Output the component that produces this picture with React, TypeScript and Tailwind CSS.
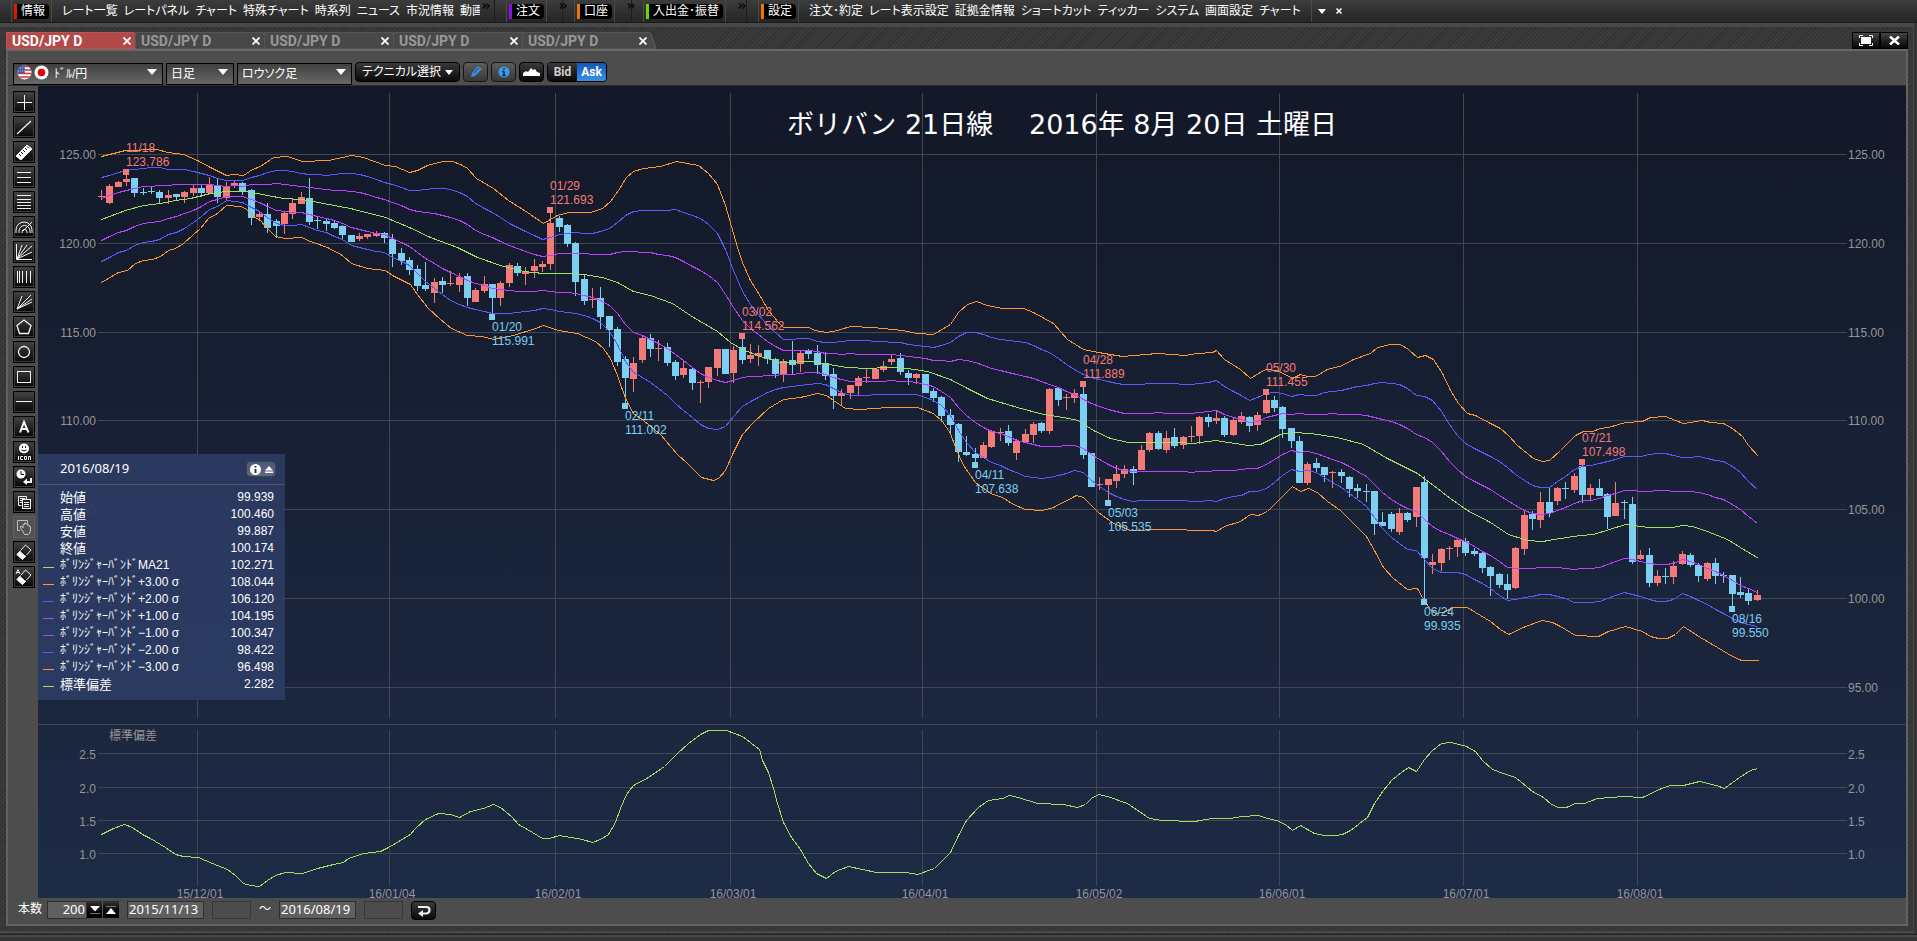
import type { ReactNode } from 'react';

const menuGroups = [
  {
    label: '情報',
    bar: 'bg-[#e01800]',
    width: 'w-[495px]',
    items: ['レート一覧', 'レートパネル', 'チャート', '特殊チャート', '時系列', 'ニュース', '市況情報', '動画'],
  },
  { label: '注文', bar: 'bg-[#8a10e8]', width: 'w-[68px]', items: [] },
  { label: '口座', bar: 'bg-[#f07800]', width: 'w-[69px]', items: [] },
  { label: '入出金･振替', bar: 'bg-[#6ad800]', width: 'w-[115px]', items: [] },
];

const settingItems = ['注文･約定', 'レート表示設定', '証拠金情報', 'ショートカット', 'ティッカー', 'システム', '画面設定', 'チャート'];

const readings = [
  { name: '始値', value: '99.939' },
  { name: '高値', value: '100.460' },
  { name: '安値', value: '99.887' },
  { name: '終値', value: '100.174' },
  { name: 'ﾎﾞﾘﾝｼﾞｬｰﾊﾞﾝﾄﾞMA21', value: '102.271', mark: 'bg-[#a0e060]' },
  { name: 'ﾎﾞﾘﾝｼﾞｬｰﾊﾞﾝﾄﾞ+3.00 σ', value: '108.044', mark: 'bg-[#ff9632]' },
  { name: 'ﾎﾞﾘﾝｼﾞｬｰﾊﾞﾝﾄﾞ+2.00 σ', value: '106.120', mark: 'bg-[#5a5aff]' },
  { name: 'ﾎﾞﾘﾝｼﾞｬｰﾊﾞﾝﾄﾞ+1.00 σ', value: '104.195', mark: 'bg-[#c040ff]' },
  { name: 'ﾎﾞﾘﾝｼﾞｬｰﾊﾞﾝﾄﾞ−1.00 σ', value: '100.347', mark: 'bg-[#c040ff]' },
  { name: 'ﾎﾞﾘﾝｼﾞｬｰﾊﾞﾝﾄﾞ−2.00 σ', value: '98.422', mark: 'bg-[#5a5aff]' },
  { name: 'ﾎﾞﾘﾝｼﾞｬｰﾊﾞﾝﾄﾞ−3.00 σ', value: '96.498', mark: 'bg-[#ff9632]' },
  { name: '標準偏差', value: '2.282', mark: 'bg-[#a0e060]' },
];

// One candle per business day: direction (u/d), high, body top, body bottom, low
const candles = `u190,196,197,200 u184,186,203,204 u181,182,187,187 u175,179,182,186 d178,178,193,197
d188,192,193,195 d186,191,192,194 d190,192,198,203 u190,195,198,204 d194,194,197,200
u191,192,197,203 u184,188,193,196 d185,188,193,197 u177,184,193,193 d179,186,197,203
u182,187,198,200 u181,183,185,188 d182,183,191,195 d189,190,218,225 u211,214,217,221
d203,214,228,233 d219,221,226,238 u212,213,224,234 u199,203,214,219 u192,197,204,204
d178,198,222,225 d216,220,221,229 d219,221,224,231 d221,223,228,229 d225,226,235,239
d235,235,242,242 u233,236,239,241 u234,234,237,239 u231,233,236,237 d232,233,238,243
d234,239,254,267 d248,253,261,265 d257,260,270,275 d265,269,286,291 d262,285,289,291
u278,282,293,303 d277,281,285,293 u271,283,284,286 u273,277,285,292 d273,276,298,306
u288,290,302,302 u276,284,291,293 d284,284,298,316 u281,283,298,306 u263,265,283,287
d263,266,273,276 u267,271,274,285 u259,266,271,278 u261,264,267,272 u213,223,264,270
d216,218,227,232 d224,225,244,247 d242,243,282,296 d275,279,301,305 u288,299,300,308
d287,298,317,329 d316,316,330,347 d327,329,362,366 d356,359,378,403 u357,363,379,392
u336,338,360,363 d334,338,349,357 u340,348,349,361 d343,347,363,366 d360,362,376,380
u361,368,375,378 d367,369,383,390 u380,382,383,403 u367,367,382,388 u349,349,368,376
d349,349,374,374 u346,350,373,383 d339,347,360,364 u344,355,359,363 u345,353,356,366
d350,350,359,364 d358,359,374,378 u359,361,374,382 d341,360,365,374 u351,353,364,372
d349,350,354,359 d345,353,365,374 d352,363,376,380 d368,374,396,409 u389,393,396,406
u385,385,393,399 u376,378,386,396 u369,377,378,383 u368,369,379,379 u361,366,370,372
u355,359,362,365 d353,358,372,375 d370,373,378,385 u373,374,378,384 d374,374,393,393
d388,391,398,402 d396,397,416,422 d409,415,425,433 d423,424,452,462 d436,452,455,456
d448,454,458,462 u442,445,458,458 u430,431,447,448 u428,432,433,441 d425,431,443,446
u439,441,453,460 u429,434,442,443 u422,424,435,443 d422,423,431,433 u388,389,431,434
d387,388,400,406 u394,397,398,410 u389,393,398,403 d387,394,455,459 d453,453,487,487
u477,484,485,490 u479,479,485,500 u465,474,481,488 u465,469,474,478 d466,469,473,485
u445,450,470,470 u432,433,450,452 d431,433,449,450 u431,438,450,453 d428,437,446,448
u436,437,445,449 u426,436,437,442 u416,417,436,444 d414,417,422,427 u411,418,421,424
d416,418,435,437 u418,420,435,436 u412,416,422,424 d416,417,426,432 u412,415,425,431
u395,400,413,414 d396,400,408,412 d406,407,429,438 d428,428,441,448 d436,441,483,483
u462,464,483,485 d458,463,468,473 d467,467,475,482 u471,472,473,488 d469,472,476,483
d476,477,489,497 d484,488,491,498 d484,491,492,502 d491,491,524,535 d512,522,526,526
d512,514,529,532 u508,513,532,535 d512,513,520,522 u487,487,517,527 d476,482,558,599
u554,562,565,574 u548,549,563,571 u546,548,549,560 u539,540,547,557 d538,541,553,556
d548,551,554,556 d552,553,568,573 d566,567,576,596 d573,574,585,588 d574,584,590,599
u547,548,588,589 u510,515,549,555 d511,514,519,530 u492,502,520,528 d487,502,513,517
u487,488,501,505 d482,488,489,499 u473,476,490,493 d465,466,495,503 u484,488,495,500
d479,488,496,496 d493,494,517,529 u482,503,516,516 d500,502,503,519 d497,504,562,564
u550,555,559,560 d548,555,583,587 u570,576,583,586 d568,576,577,584 u561,566,577,584
u551,554,564,565 d553,555,565,567 d563,565,576,582 u562,563,579,581 d558,563,576,584
d572,575,576,583 d575,575,594,606 d577,592,595,598 d589,593,601,605 u590,595,600,601`
  .split(/\s+/)
  .map((c) => ({ up: c[0] === 'u', y: c.slice(1).split(',').map(Number) }));

const toPoints = (s: string) => s.trim().split(/\s+/).map((p) => p.split(',').map(Number));

const upper = toPoints(`101,156 113,153 125,150 157,149 167,152 183,154 197,160 210,167 226,175 233,174 243,175 252,169
260,166 273,157 287,156 302,161 328,160 351,155 363,157 385,165 395,166 409,172 417,170 427,165 442,161 452,161 460,164
467,168 476,178 493,188 508,200 527,212 543,223 557,215 568,212 590,212 602,208 610,201 618,190 626,177 633,171 643,168
660,166 676,161 698,165 708,173 717,184 725,205 731,226 737,247 742,262 750,280 760,296 768,310 778,322 783,327 808,327
815,330 826,332 837,330 850,326 872,327 902,330 917,333 933,334 950,324 958,312 967,304 976,301 987,305 1002,308
1023,308 1033,312 1053,323 1067,339 1083,349 1098,352 1122,356 1157,353 1185,355 1197,353 1212,352 1216,350 1224,359
1240,369 1250,378 1265,369 1277,370 1292,378 1300,374 1307,376 1315,376 1327,369 1342,365 1353,359 1370,353 1377,347
1390,344 1400,344 1408,349 1417,357 1425,355 1433,359 1442,373 1450,390 1458,403 1467,413 1475,415 1490,423 1500,428
1508,435 1517,445 1533,458 1542,461 1549,460 1560,450 1575,435 1583,431 1592,431 1600,428 1608,427 1625,422 1642,421
1650,417 1665,416 1675,420 1683,423 1702,420 1710,422 1723,423 1732,428 1742,436 1748,445 1758,456`);

const middle = toPoints(`101,219 125,210 143,205 160,203 175,200 190,198 210,193 225,191 243,191 252,192 267,195 283,198
302,199 323,203 350,208 385,217 409,227 430,237 457,247 477,257 500,265 523,271 543,273 570,273 583,274 602,277 617,282
633,291 650,295 672,303 693,317 717,331 730,342 742,349 760,356 780,362 813,361 828,364 847,367 867,368 887,367 907,368
927,371 950,379 967,388 987,398 1017,407 1043,414 1063,417 1078,420 1093,430 1110,438 1128,442 1180,442 1193,443
1215,440 1248,445 1260,444 1280,434 1292,432 1310,433 1337,437 1363,444 1387,458 1417,473 1433,485 1450,498 1467,510
1490,522 1508,534 1527,540 1542,541 1560,538 1580,535 1593,534 1625,524 1648,527 1672,527 1682,525 1692,526 1707,531
1727,539 1740,547 1758,558`);

const lower = toPoints(`101,282 118,272 127,270 135,263 143,260 152,259 160,256 168,250 175,248 183,243 193,234 200,228
208,218 217,213 226,205 240,206 245,208 253,216 260,220 267,228 275,236 285,238 301,237 310,241 327,247 342,255 351,263
367,268 385,270 392,275 410,284 417,294 427,307 440,319 451,328 467,335 482,336 493,339 513,335 535,328 543,325 558,330
577,333 595,341 603,348 610,358 617,375 625,398 633,413 643,420 660,434 677,454 687,463 701,477 713,480 718,478 725,470
733,452 742,434 752,423 768,408 783,399 800,397 817,393 826,395 833,400 845,408 860,409 887,407 917,407 933,413 942,421
950,433 955,447 963,465 975,482 990,493 1002,497 1013,504 1025,509 1042,510 1053,507 1076,495 1083,497 1098,512
1113,523 1130,530 1160,529 1212,530 1216,531 1224,526 1240,521 1250,514 1258,515 1267,511 1275,503 1292,486 1300,491
1308,488 1317,492 1327,501 1340,510 1350,520 1366,536 1375,552 1383,567 1393,578 1407,589 1417,588 1422,597 1430,609
1435,613 1443,612 1453,607 1467,607 1475,612 1490,621 1500,629 1508,634 1525,626 1542,620 1552,622 1560,626 1575,635
1598,636 1608,631 1625,626 1642,631 1650,636 1658,638 1667,638 1675,634 1683,626 1700,637 1717,647 1732,656 1741,660
1758,660`);

const deviation = `101,834 113,828 124,824 132,827 142,834 150,838 165,847 175,854 183,856 198,857 212,863 227,869 235,875
243,883 250,885 259,886 267,880 275,875 285,872 302,873 317,868 333,864 343,862 348,858 363,853 380,851 388,847 410,834
415,828 425,819 438,813 450,814 459,817 470,811 483,808 493,804 500,807 511,816 518,824 527,829 542,838 549,838 559,835
570,837 582,839 592,842 600,839 608,834 615,822 620,808 626,794 633,785 648,777 664,766 676,754 688,743 700,734 708,730
726,730 742,736 759,749 762,760 768,772 773,788 777,803 783,822 791,837 800,849 808,863 816,873 826,878 835,871 848,866
862,869 876,872 906,872 917,874 934,868 950,852 958,835 966,820 978,807 988,800 1002,798 1009,795 1018,797 1037,803
1063,804 1077,807 1085,804 1092,797 1099,794 1110,797 1127,803 1149,818 1162,820 1194,821 1212,818 1230,818 1241,816
1258,815 1267,818 1276,820 1285,824 1292,830 1300,825 1314,833 1324,835 1335,835 1342,834 1350,830 1367,817 1374,803
1383,790 1392,779 1401,772 1408,767 1416,771 1424,759 1432,750 1441,743 1451,742 1466,746 1475,751 1482,760 1492,769
1503,773 1515,777 1532,791 1543,797 1551,804 1558,807 1566,807 1575,803 1584,803 1597,798 1623,796 1642,797 1661,788
1670,785 1683,785 1699,781 1716,785 1724,788 1739,777 1750,770 1757,768`;

const months = [
  [197, '15/12/01'],
  [389, '16/01/04'],
  [555, '16/02/01'],
  [730, '16/03/01'],
  [922, '16/04/01'],
  [1096, '16/05/02'],
  [1279, '16/06/01'],
  [1463, '16/07/01'],
  [1637, '16/08/01'],
] as const;

const priceTicks = [
  [154, '125.00'],
  [243, '120.00'],
  [332, '115.00'],
  [420, '110.00'],
  [509, '105.00'],
  [598, '100.00'],
  [687, '95.00'],
] as const;

const deviationTicks = [
  [753, '2.5'],
  [787, '2.0'],
  [820, '1.5'],
  [853, '1.0'],
] as const;

const pivots = [
  { day: 3, y: 169, high: true, date: '11/18', price: '123.786' },
  { day: 47, y: 314, high: false, date: '01/20', price: '115.991' },
  { day: 54, y: 207, high: true, date: '01/29', price: '121.693' },
  { day: 63, y: 403, high: false, date: '02/11', price: '111.002' },
  { day: 77, y: 333, high: true, date: '03/02', price: '114.562' },
  { day: 105, y: 462, high: false, date: '04/11', price: '107.638' },
  { day: 118, y: 381, high: true, date: '04/28', price: '111.889' },
  { day: 121, y: 500, high: false, date: '05/03', price: '105.535' },
  { day: 140, y: 389, high: true, date: '05/30', price: '111.455' },
  { day: 159, y: 599, high: false, date: '06/24', price: '99.935' },
  { day: 178, y: 459, high: true, date: '07/21', price: '107.498' },
  { day: 196, y: 606, high: false, date: '08/16', price: '99.550' },
];

const dayX = (i: number) => Math.round(101 + i * 8.32);

function valueAt(points: number[][], x: number) {
  const next = points.findIndex((p) => p[0] >= x);
  if (next === 0) return points[0][1];
  if (next < 0) return points[points.length - 1][1];
  const [x0, y0] = points[next - 1];
  const [x1, y1] = points[next];
  return y0 + ((y1 - y0) * (x - x0)) / (x1 - x0);
}

// Inner bands sit at thirds between the average and the outer band
function band(outer: number[][], sigma: number) {
  return candles
    .map((_, i) => {
      const x = dayX(i);
      const mid = valueAt(middle, x);
      return `${x},${Math.round(mid + ((valueAt(outer, x) - mid) * sigma) / 3)}`;
    })
    .join(' ');
}

const join = (points: number[][]) => points.map((p) => p.join(',')).join(' ');

function Chart() {
  return (
    <svg viewBox="38 86 1868 812" className="block w-full h-auto overflow-visible" role="img" aria-label="USD/JPY">
      <defs>
        <linearGradient id="night" x1="0" y1="0" x2="0" y2="1">
          <stop offset="0" stopColor="#121827" />
          <stop offset="1" stopColor="#1e2b46" />
        </linearGradient>
      </defs>
      <rect x="38" y="86" width="1868" height="812" fill="url(#night)" />

      <g fill="#424650" shapeRendering="crispEdges">
        {months.map(([x]) => (
          <g key={x}>
            <rect x={x} y="93" width="1" height="625" />
            <rect x={x} y="730" width="1" height="156" />
          </g>
        ))}
        {[...priceTicks, ...deviationTicks].map(([y]) => (
          <rect key={y} x="98" y={y} width="1749" height="1" />
        ))}
        <rect x="38" y="724" width="1868" height="1" />
      </g>

      <g className="text-[12px] font-['Liberation_Sans',sans-serif]" fill="#959595">
        {priceTicks.map(([y, label]) => (
          <g key={y}>
            <text x="96" y={y + 5} textAnchor="end">{label}</text>
            <text x="1848" y={y + 5}>{label}</text>
          </g>
        ))}
        {deviationTicks.map(([y, label]) => (
          <g key={y}>
            <text x="96" y={y + 6} textAnchor="end">{label}</text>
            <text x="1848" y={y + 6}>{label}</text>
          </g>
        ))}
        {months.map(([x, label]) => (
          <text key={x} x={x + 3} y="898" textAnchor="middle">{label}</text>
        ))}
        <text x="109" y="740" className="font-['Noto_Sans_CJK_JP',sans-serif]">標準偏差</text>
      </g>

      <g shapeRendering="crispEdges">
        {candles.map(({ up, y: [high, top, bottom, low] }, i) => (
          <g key={i} fill={up ? '#f47a78' : '#7ccff0'}>
            <rect x={dayX(i)} y={high} width="1" height={low - high} />
            <rect x={dayX(i) - 3} y={top} width="7" height={bottom - top} />
          </g>
        ))}
      </g>

      <g fill="none" strokeWidth="1" shapeRendering="crispEdges" transform="translate(0.5 0.5)">
        <polyline points={join(upper)} stroke="#ff9632" />
        <polyline points={band(upper, 2)} stroke="#5a5aff" />
        <polyline points={band(upper, 1)} stroke="#c040ff" />
        <polyline points={join(middle)} stroke="#a0e060" />
        <polyline points={band(lower, 1)} stroke="#c040ff" />
        <polyline points={band(lower, 2)} stroke="#5a5aff" />
        <polyline points={join(lower)} stroke="#ff9632" />
        <polyline points={deviation} stroke="#a0e060" />
      </g>

      <g className="text-[12px] font-['Liberation_Sans',sans-serif]">
        {pivots.map((p) => (
          <g key={p.date} fill={p.high ? '#f47a78' : '#7ccff0'}>
            <rect x={dayX(p.day) - 3} y={p.y} width="6" height="6" />
            <text x={dayX(p.day)} y={p.high ? p.y - 17 : p.y + 17}>{p.date}</text>
            <text x={dayX(p.day)} y={p.high ? p.y - 3 : p.y + 31}>{p.price}</text>
          </g>
        ))}
      </g>

      <g fill="#fff" className="text-[27px] font-['DejaVu_Sans','Noto_Sans_CJK_JP',sans-serif]">
        <text x="787" y="134">ボリバン 21日線</text>
        <text x="1029" y="134">2016年 8月 20日 土曜日</text>
      </g>
    </svg>
  );
}

const eraser = (
  <>
    <path d="M4 13.500L12.500 4L18 9L9.500 18.500Z" />
    <path d="M4 13.500L7 10.500L12.500 15.500L9.500 18.500Z" fill="#fff" />
    <path d="M7 8.500L14 15" stroke="#111" />
  </>
);

const tools: { name: string; icon: ReactNode; disabled?: boolean }[] = [
  { name: '十字線', icon: <path d="M4 11.500H19M11.500 4V19" /> },
  { name: '直線', icon: <path d="M4 18L18 5" strokeWidth="1.300" /> },
  {
    name: '定規',
    icon: (
      <>
        <path d="M3 15 L14 4 L19 8 L8 19 Z" fill="#fff" />
        <path d="M6 13l2 2M8 11l2 2M10 9l2 2M12 7l2 2M14 5.500l2 2" stroke="#111" />
      </>
    ),
  },
  { name: '三本線', icon: <path d="M4 6.500H18M4 11.500H18M4 16.500H18" /> },
  { name: '五本線', icon: <path d="M4 4.500H18M4 8.500H18M4 11.500H18M4 14.500H18M4 17.500H18" /> },
  {
    name: '円弧',
    icon: <path d="M3 17v-3a8 8 0 0 1 16 0v3M6 17v-2a5.500 5.500 0 0 1 11 0v2M9 17v-1a2.500 2.500 0 0 1 5 0v1M10 15L19 6" />,
  },
  { name: 'ファン', icon: <path d="M4 18L9 4M4 18L14 4M4 18L19 5M4 18L19 11M3.500 3V18.500H19" /> },
  { name: '縦線', icon: <path d="M4.500 5V17M6.500 5V17M9.500 5V17M13.500 5V17M17.500 5V17" /> },
  { name: '扇形', icon: <path d="M4 18L9 5M4 18L18 4M4 18L19 8M4 18L19 11" /> },
  { name: '多角形', icon: <path d="M11 4L18 9.500L15.500 17.500H6.500L4 9.500Z" strokeWidth="1.300" /> },
  { name: '円', icon: <circle cx="11" cy="11" r="5.500" strokeWidth="1.300" /> },
  { name: '四角形', icon: <rect x="4.500" y="5.500" width="13" height="11" /> },
  { name: '水平線', icon: <path d="M3 10.500H19" /> },
  { name: '文字', icon: <path d="M7 16.500L11 6L15.500 16.500M8.500 13H14" strokeWidth="2" /> },
  {
    name: 'アイコン',
    icon: (
      <>
        <circle cx="11" cy="7.500" r="5" fill="#fff" stroke="none" />
        <path d="M9.500 5v2M12.500 5v2M8.500 9q2.500 2 5 0" stroke="#111" />
        <path d="M5.500 15v4M10 15.500H7.500v3H10M11.500 15.500h2v3h-2zM15.500 19v-3.500h2V19" />
      </>
    ),
  },
  {
    name: '時間',
    icon: (
      <>
        <circle cx="8" cy="8" r="4.500" fill="#fff" stroke="none" />
        <path d="M8 5v3.500h3" stroke="#111" />
        <path d="M18 12v4h-5" strokeWidth="2" />
        <path d="M14 12.500V19L10 16Z" fill="#fff" stroke="none" />
      </>
    ),
  },
  {
    name: '複製',
    icon: (
      <>
        <path d="M8.500 14.500h-3V5.500h8v3" />
        <path d="M7 7.500h5M7 9.500h2M7 11.500h2" />
        <rect x="9.500" y="8.500" width="8" height="9" fill="#222" />
        <path d="M11 11.500h5M11 13.500h5M11 15.500h5" />
      </>
    ),
  },
  {
    name: '移動',
    disabled: true,
    icon: (
      <>
        <path d="M7 14.500H4.500V4.500h10v3" />
        <path d="M9 14l-2-3 1-1 2 2V8.500h1.500V7h1.500v1h1.500v1H16v1.500h1.500V15l-2 3.500h-4z" />
      </>
    ),
  },
  { name: '消去', icon: eraser },
  {
    name: '全消去',
    icon: (
      <>
        {eraser}
        <path d="M3 8L5 3.500L7 8M4 6.500h2" />
      </>
    ),
  },
];

function Tool({ name, icon, disabled }: { name: string; icon: ReactNode; disabled?: boolean }) {
  return (
    <button
      aria-label={name}
      disabled={disabled}
      className={`block size-[22px] border ${
        disabled
          ? 'border-[#6a6a6a] bg-[#555] opacity-70'
          : 'border-black bg-linear-to-b from-[#444] to-[#080808] shadow-[inset_0_0_0_1px_#3c3c3c]'
      }`}
    >
      <svg viewBox="1 1 20 20" width="20" height="20" fill="none" stroke="#f2f2f2" strokeWidth="1">
        {icon}
      </svg>
    </button>
  );
}

function Grip() {
  return (
    <span className="w-[5px] h-4 shrink-0 bg-[radial-gradient(#8a8a8a_40%,transparent_50%)] bg-[size:2px_2px]" />
  );
}

function Divider() {
  return <span className="w-px self-stretch shrink-0 bg-[#4a4a4a]" />;
}

function GroupLabel({ label, bar }: { label: string; bar: string }) {
  return (
    <span className="flex h-[15px] shrink-0">
      <span className={`w-[3px] ${bar}`} />
      <button className="bg-black rounded-r-sm px-1 leading-[15px]">{label}</button>
    </span>
  );
}

function MenuItem({ text }: { text: string }) {
  return <a href="#" className="whitespace-nowrap shrink-0">{text}</a>;
}

function MenuBar() {
  return (
    <nav className="flex h-[23px] pr-1 bg-linear-to-b from-[#3c3c3c] to-[#262626] border-b border-[#1a1a1a] text-[12px] text-white [font-feature-settings:'palt']">
      {menuGroups.map((group) => (
        <div key={group.label} className={`flex items-center gap-0.5 pl-1 shrink-0 ${group.width} border-r border-[#1c1c1c]`}>
          <Grip />
          <Divider />
          <GroupLabel label={group.label} bar={group.bar} />
          <Divider />
          <div className="flex flex-1 gap-1.5 pl-2 overflow-hidden">
            {group.items.map((item) => (
              <MenuItem key={item} text={item} />
            ))}
          </div>
          <svg viewBox="0 0 8 6" className="w-2 h-1.5 mr-1 mb-2.5 shrink-0" fill="none" stroke="#0a0a0a" strokeWidth="1.500">
            <path d="M1 0.500L3.500 3L1 5.500M4.500 0.500L7 3L4.500 5.500" />
          </svg>
        </div>
      ))}
      <div className="flex items-center gap-0.5 pl-1">
        <Grip />
        <Divider />
        <GroupLabel label="設定" bar="bg-[#f07800]" />
        <Divider />
        <div className="flex gap-1.5 px-2">
          {settingItems.map((item) => (
            <MenuItem key={item} text={item} />
          ))}
        </div>
        <Divider />
        <button aria-label="メニュー" className="px-1">
          <svg viewBox="0 0 8 5" className="w-2 h-[5px]" fill="#fff"><path d="M0 0H8L4 5Z" /></svg>
        </button>
        <button aria-label="閉じる" className="px-1">
          <svg viewBox="0 0 6 6" className="size-1.5" stroke="#fff" strokeWidth="1.500"><path d="M0.500 0.500L5.500 5.500M5.500 0.500L0.500 5.500" /></svg>
        </button>
      </div>
    </nav>
  );
}

function Tab({ active }: { active?: boolean }) {
  return (
    <div className="relative w-[129px] h-full">
      <svg viewBox="0 0 135 17" className="absolute left-0 top-0 w-[135px] h-[17px]">
        <path
          d="M0 17V2Q0 0 2 0H126Q128 0 129 2L134 17Z"
          fill={active ? '#b24848' : '#484848'}
          stroke={active ? '#c86060' : '#606060'}
          strokeWidth="1"
        />
      </svg>
      <div className="relative flex items-center justify-between h-full pl-1.5 pr-1 pt-px">
        <button className={`text-[14px] leading-4 font-bold font-['Roboto',sans-serif] ${active ? 'text-white' : 'text-[#989898]'}`}>
          USD/JPY D
        </button>
        <button aria-label="タブを閉じる">
          <svg viewBox="0 0 8 8" className="size-2" stroke="#fff" strokeWidth="1.800"><path d="M0.500 0.500L7.500 7.500M7.500 0.500L0.500 7.500" /></svg>
        </button>
      </div>
    </div>
  );
}

function Picker({ label, value, width, flags }: { label: string; value: string; width: string; flags?: boolean }) {
  return (
    <div className={`relative h-[22px] ${width}`}>
      <select
        aria-label={label}
        className={`appearance-none w-full h-full border border-black bg-linear-to-b from-[#404040] to-[#686868] text-[12px] text-white outline-none [font-feature-settings:'palt'] ${flags ? 'pl-10' : 'pl-1'}`}
      >
        <option>{value}</option>
      </select>
      {flags && (
        <svg viewBox="0 0 32 15" className="absolute left-1 top-1 w-8 h-[15px]">
          <clipPath id="usa"><circle cx="7.500" cy="7.500" r="7" /></clipPath>
          <g clipPath="url(#usa)">
            <rect width="15" height="15" fill="#fff" />
            <path d="M0 1.500H15M0 5H15M0 8.500H15M0 12H15" stroke="#d83038" strokeWidth="1.700" />
            <rect width="8" height="8" fill="#3860b8" />
            <path d="M1 3h7M1 6h7" stroke="#c0d0f0" strokeWidth="0.800" strokeDasharray="1 1" />
          </g>
          <circle cx="24.500" cy="7.500" r="7" fill="#fff" />
          <circle cx="24.500" cy="7.500" r="3.800" fill="#e00010" />
        </svg>
      )}
      <svg viewBox="0 0 10 6" className="absolute right-1.5 top-2 w-2.5 h-1.5 pointer-events-none" fill="#fff"><path d="M0 0H10L5 6Z" /></svg>
    </div>
  );
}

const darkButton = 'flex items-center justify-center border border-black rounded-sm bg-linear-to-b from-[#3a3a3a] to-[#0a0a0a]';
const greyButton = 'flex items-center justify-center w-[25px] h-5 border border-[#161616] rounded-sm bg-linear-to-b from-[#5c5c5c] to-[#383838]';

function ChartToolbar() {
  return (
    <div className="flex items-center gap-[3px] h-[35px] px-[5px] pb-1 pt-3 border-b border-[#2c2c2c] text-white">
      <Picker label="通貨ペア" value="ﾄﾞﾙ/円" width="w-[150px]" flags />
      <Picker label="足種" value="日足" width="w-[68px]" />
      <Picker label="チャート種類" value="ロウソク足" width="w-[115px]" />
      <button className={`${darkButton} h-5 w-[105px] gap-1 text-[12px] [font-feature-settings:'palt']`}>
        テクニカル選択
        <svg viewBox="0 0 8 5" className="w-2 h-[5px]" fill="#fff"><path d="M0 0H8L4 5Z" /></svg>
      </button>
      <button aria-label="描画" className={greyButton}>
        <svg viewBox="0 0 14 14" className="size-3.5">
          <path d="M2 12L3 8L9 1L13 4L6 11Z" fill="#3a8ee0" />
          <path d="M5 8L10 3" stroke="#14406e" />
        </svg>
      </button>
      <button aria-label="情報" className={greyButton}>
        <svg viewBox="0 0 14 14" className="size-3">
          <circle cx="7" cy="7" r="6.500" fill="#3a9af0" />
          <path d="M7 2.500v2M7 6v5M5 6.500h2M5 11h4" stroke="#1c2630" strokeWidth="1.800" />
        </svg>
      </button>
      <button aria-label="エリア" className={`${darkButton} w-[25px] h-5`}>
        <svg viewBox="0 0 17 10" className="w-[17px] h-2.5" fill="#fff"><path d="M0 9V6L3 4L5 5L8 1L10 3L12 2L14 5L17 6V9Z" /></svg>
      </button>
      <div className="flex h-5 border border-black rounded-sm overflow-hidden text-[12px] font-bold font-['Roboto',sans-serif]">
        <button className="w-[29px] bg-linear-to-b from-[#3a3a3a] to-[#0a0a0a] text-[#d0d0d0]">Bid</button>
        <button className="w-[29px] bg-linear-to-b from-[#1058b8] to-[#3a90e8]">Ask</button>
      </div>
    </div>
  );
}

function DataPanel() {
  return (
    <section className="absolute left-0 top-[368px] w-[247px] h-[246px] bg-[#2c3b62]/95 text-white">
      <header className="flex items-center h-[31px] pl-[7px] pr-[9px] border-b border-[#4a5470]">
        <Grip />
        <span className="flex-1 pl-2.5 text-[13px] font-['Noto_Sans',sans-serif]">2016/08/19</span>
        <button aria-label="表示切替" className="flex items-center justify-center gap-1 w-[30px] h-4 rounded-sm border border-[#3a4055] bg-linear-to-b from-[#4c5878] to-[#606880]">
          <svg viewBox="0 0 11 11" className="size-[11px]">
            <circle cx="5.500" cy="5.500" r="5.500" fill="#fff" />
            <path d="M5.500 2v1.500M5.500 5v4" stroke="#222" strokeWidth="1.800" />
          </svg>
          <svg viewBox="0 0 8 7" className="w-2 h-[7px]" fill="#fff"><path d="M0 4.500L4 0L8 4.500ZM0 5.500H8V7H0Z" /></svg>
        </button>
      </header>
      <table className="w-full mt-1 border-collapse text-[12px] leading-[17px]">
        <tbody>
          {readings.map((row) => (
            <tr key={row.name} className="h-[17px]">
              <td className="w-[22px] p-0 pl-[5px] pt-1"><span className={`block w-[11px] h-px ${row.mark ?? ''}`} /></td>
              <th scope="row" className={`p-0 text-left font-normal whitespace-nowrap ${row.name.length < 5 ? 'text-[13px]' : ''}`}>{row.name}</th>
              <td className="p-0 pr-[11px] text-right">{row.value}</td>
            </tr>
          ))}
        </tbody>
      </table>
    </section>
  );
}

const field = "h-[18px] border border-[#2e2e2e] bg-[#606060] text-[13px] text-white px-px outline-none font-['Noto_Sans',sans-serif]";
const blankField = 'w-[39px] h-[18px] border border-[#383838] bg-[#4c4c4c] outline-none';

function RangeBar() {
  return (
    <div className="flex items-start h-[26px] pt-[3px] pl-[10px] text-white text-[12px]">
      <label htmlFor="bars" className="w-[29px] leading-[17px]">本数</label>
      <input id="bars" defaultValue="200" className={`${field} w-10 text-right`} />
      <button aria-label="減らす" className="flex items-center justify-center w-4 h-[17px] bg-linear-to-b from-[#333] to-black border-r border-[#555]">
        <svg viewBox="0 0 10 8" className="w-2.5 h-2" fill="#fff"><path d="M0 0H10L5 5.500Z" /><path d="M0 7H10V8H0Z" fill="#777" /></svg>
      </button>
      <button aria-label="増やす" className="flex items-center justify-center w-4 h-[17px] bg-linear-to-b from-[#333] to-black">
        <svg viewBox="0 0 10 8" className="w-2.5 h-2" fill="#fff"><path d="M0 8H10L5 2Z" /><path d="M0 0H10V1H0Z" fill="#777" /></svg>
      </button>
      <input aria-label="開始日" defaultValue="2015/11/13" className={`${field} w-[77px] ml-2`} />
      <input aria-label="開始時刻" className={`${blankField} ml-2`} />
      <span className="w-7 text-center leading-[17px]">～</span>
      <input aria-label="終了日" defaultValue="2016/08/19" className={`${field} w-[77px]`} />
      <input aria-label="終了時刻" className={`${blankField} ml-2`} />
      <button aria-label="更新" className={`${darkButton} w-[25px] h-[19px] ml-2`}>
        <svg viewBox="0 0 14 12" className="w-3.5 h-3" fill="none" stroke="#eee" strokeWidth="2.200">
          <path d="M1 2H9.500Q12.500 2 12.500 5T9.500 8.500H5" />
          <path d="M6 5V12L1 8.500Z" fill="#eee" stroke="none" />
        </svg>
      </button>
    </div>
  );
}

export default function App() {
  const texture = 'bg-[repeating-linear-gradient(135deg,#313131_0_1px,#3b3b3b_1px_3px)]';
  return (
    <div className="min-h-screen bg-[#343434] font-['Liberation_Sans','Noto_Sans_CJK_JP',sans-serif]">
      <MenuBar />
      <main className={`mr-[3px] border-t-4 border-r border-b-2 border-[#484848] ${texture}`}>
        <div className="flex items-end justify-between h-[22px] pl-1.5 pr-[5px]">
          <div className="flex h-[17px]">
            <Tab active />
            <Tab />
            <Tab />
            <Tab />
            <Tab />
          </div>
          <div className="flex h-[17px]">
            <button aria-label="最大化" className="flex items-center justify-center w-7 border border-black bg-linear-to-b from-[#444] to-[#080808]">
              <svg viewBox="0 0 14 11" className="w-3.5 h-[11px]" fill="none" stroke="#fff">
                <path d="M0.500 3V0.500H4M10 0.500H13.500V3M13.500 8V10.500H10M4 10.500H0.500V8" />
                <rect x="2" y="2" width="10" height="7" fill="#fff" stroke="none" />
              </svg>
            </button>
            <button aria-label="閉じる" className="flex items-center justify-center w-7 border border-black bg-linear-to-b from-[#444] to-[#080808]">
              <svg viewBox="0 0 11 9" className="w-[11px] h-[9px]" stroke="#fff" strokeWidth="2.500"><path d="M1 0.500L10 8.500M10 0.500L1 8.500" /></svg>
            </button>
          </div>
        </div>
        <div className="ml-1.5 mr-[5px] border-2 border-t-[#686868] border-[#626262] bg-[#4d4d4d]">
          <ChartToolbar />
          <div className="flex">
            <div className="flex flex-col gap-[3px] w-[30px] shrink-0 pt-[5px] pl-[5px]">
              {tools.map((tool) => (
                <Tool key={tool.name} {...tool} />
              ))}
            </div>
            <div className="relative flex-1 min-w-0">
              <Chart />
              <DataPanel />
            </div>
          </div>
          <RangeBar />
        </div>
        <div className="h-[5px]" />
      </main>
      <div className="h-px mt-px bg-[#222]" />
      <div className="h-0.5 bg-[#484848]" />
    </div>
  );
}
